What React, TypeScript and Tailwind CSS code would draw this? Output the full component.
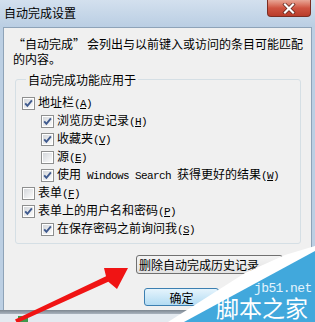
import React from "react";

const Check = ({ checked }: { checked: boolean }) => (
  <svg width="13" height="13" viewBox="0 0 13 13" className="shrink-0">
    <defs>
      <linearGradient id="cbg" x1="0" y1="0" x2="1" y2="1">
        <stop offset="0" stopColor="#d4d7db" />
        <stop offset="1" stopColor="#fbfbfb" />
      </linearGradient>
    </defs>
    <rect x="0.5" y="0.5" width="12" height="12" fill="#fff" stroke="#8e8f8f" />
    <rect x="2" y="2" width="9" height="9" fill="url(#cbg)" />
    {checked && (
      <path d="M3.2 6.4 L5.4 8.9 L9.9 3.4" fill="none" stroke="#3f5a8e" strokeWidth="1.9" />
    )}
  </svg>
);

const Key = ({ k }: { k: string }) => (
  <span className="font-['Liberation_Mono',monospace] text-[11px] tracking-[-0.6px]">
    (<span className="underline underline-offset-1">{k}</span>)
  </span>
);

const Row = ({
  checked,
  level,
  children,
}: {
  checked: boolean;
  level: number;
  children: React.ReactNode;
}) => (
  <div className={`flex items-center h-[18px] ${level === 2 ? "pl-[19px]" : ""}`}>
    <Check checked={checked} />
    <span className="ml-[3px] whitespace-nowrap">{children}</span>
  </div>
);

export default function App() {
  return (
    <div className="relative w-[315px] h-[322px] overflow-hidden bg-[#bccfe3] text-black font-['Noto_Sans_CJK_SC','Noto_Sans',sans-serif] text-[12px] leading-[15px] flex flex-col">
      {/* Title bar */}
      <div className="h-[27px] shrink-0 flex items-start bg-gradient-to-b from-[#d3e0ee] to-[#bacee3]">
        <div className="pl-[4px] pt-[5px] text-[12px] leading-[15px] text-black">自动完成设置</div>
        <div className="ml-auto mr-[4px] w-[44px] h-[17px] rounded-b-[4px] border border-t-0 border-[#7a2d22] bg-gradient-to-b from-[#e8a696] via-[#cf5441] to-[#b93c2a] flex items-center justify-center">
          <svg width="14" height="11" viewBox="0 0 14 11">
            <path d="M3 1.5 L11 9.5 M11 1.5 L3 9.5" stroke="#5a2018" strokeWidth="3.6" strokeLinecap="square" />
            <path d="M3 1.5 L11 9.5 M11 1.5 L3 9.5" stroke="#ffffff" strokeWidth="2.2" strokeLinecap="square" />
          </svg>
        </div>
      </div>

      {/* Client area */}
      <div className="mx-[3px] h-[283px] shrink-0 bg-[#f0f0f0] border border-b-0 border-[#8ea3b8]">
        <div className="pt-[8px] pl-[9px]">
          <div className="whitespace-nowrap">
            <span className="inline-block w-[12px] text-right">“</span>自动完成<span className="inline-block w-[14px] text-left">”</span>会列出与以前键入或访问的条目可能匹配
          </div>
          <div className="whitespace-nowrap">的内容。</div>
        </div>

        <fieldset className="ml-[11px] mt-[6px] w-[286px] border border-[#d5dfe5] rounded-[3px] pt-[7px] pb-[5px] pl-[6px]">
          <legend className="ml-[4px] px-[2px] leading-[15px]">自动完成功能应用于</legend>
          <Row checked level={1}>地址栏<Key k="A" /></Row>
          <Row checked level={2}>浏览历史记录<Key k="H" /></Row>
          <Row checked level={2}>收藏夹<Key k="V" /></Row>
          <Row checked={false} level={2}>源<Key k="E" /></Row>
          <Row checked level={2}>
            使用
            <span className="font-['Liberation_Mono',monospace] text-[11px] tracking-[-0.6px]"> Windows Search </span>
            获得更好的结果<Key k="W" />
          </Row>
          <Row checked={false} level={1}>表单<Key k="F" /></Row>
          <Row checked level={1}>表单上的用户名和密码<Key k="P" /></Row>
          <Row checked level={2}>在保存密码之前询问我<Key k="S" /></Row>
        </fieldset>

        <div className="mt-[11px] ml-[132px] w-[147px] h-[19px] rounded-[3px] border border-[#707070] bg-gradient-to-b from-[#f4f4f4] to-[#e2e2e2] flex items-center pl-[2px] whitespace-nowrap leading-[15px]">
          删除自动完成历史记录...
        </div>

        <div className="mt-[14px] ml-[140px] w-[75px] h-[18px] rounded-[3px] border border-[#3c7fb1] bg-gradient-to-b from-[#e5f4fc] to-[#b3dcf3] flex items-center justify-center leading-[15px]">
          确定
        </div>
      </div>

      {/* Bottom frame */}
      <div className="flex-1 flex flex-col">
        <div className="h-[4px] bg-gradient-to-b from-[#7d8791] to-[#aab4bf]" />
        <div className="flex-1 bg-[#e4eaf0] flex items-end pl-[18px]">
          <div className="w-[10px] h-[6px] bg-[#3e9a4c]" />
        </div>
      </div>

      {/* Red arrow overlay */}
      <svg className="absolute left-0 top-0 pointer-events-none" width="315" height="322" viewBox="0 0 315 322">
        <polygon
          points="15,319.6 106,276.2 104,268 128,268 117,289 108.3,281.8 17,323"
          fill="#f01414"
        />
      </svg>

      {/* Watermark */}
      <svg className="absolute left-0 top-0 pointer-events-none" width="315" height="322" viewBox="0 0 315 322">
        <polygon points="168,322 245,273 285,255 315,246 315,322" fill="#ffffff" />
        <polygon points="184,322 315,251 315,322" fill="#41a8dc" />
      </svg>
      <div className="absolute left-[254px] top-[281px] font-['Liberation_Mono',monospace] text-[13px] tracking-[-0.6px] leading-[15px] text-[#e3f3fc] whitespace-nowrap">
        jb51.net
      </div>
      <div className="absolute left-[216px] top-[295px] text-[23px] leading-[25px] text-white whitespace-nowrap">
        脚本之家
      </div>
    </div>
  );
}
